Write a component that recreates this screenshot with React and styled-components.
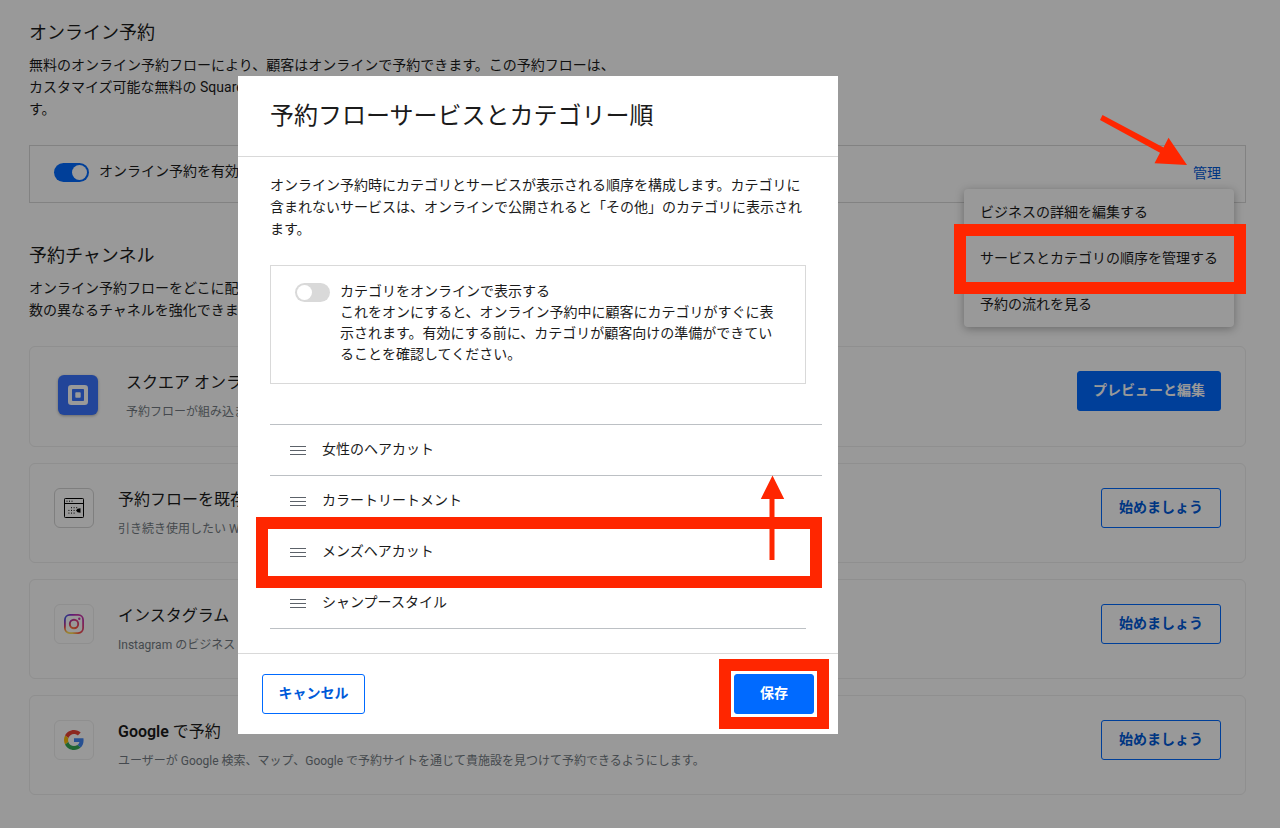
import React from 'react';
import styled, { createGlobalStyle, css } from 'styled-components';

const GlobalStyle = createGlobalStyle`
  *, *::before, *::after { box-sizing: border-box; }
  body {
    margin: 0;
    background: #fff;
    color: #1b1b1b;
    font-family: Roboto, "Noto Sans CJK JP", sans-serif;
    font-size: 14px;
    line-height: 22px;
  }
  h1, h2, h3, p, ul { margin: 0; padding: 0; }
  ul { list-style: none; }
  button { font-family: inherit; cursor: pointer; }
`;

const Page = styled.main`
  min-height: 100vh;
  padding: 21px 34px 32px 29px;
`;

const SectionTitle = styled.h2`
  font-size: 18px;
  font-weight: 400;
  line-height: 24px;
`;

const SectionText = styled.p`
  max-width: 640px;
  margin-top: 9px;
`;

const EnablePanel = styled.section`
  position: relative;
  display: flex;
  align-items: flex-start;
  justify-content: space-between;
  height: 58px;
  margin: 25px 0 41px;
  padding: 15px 24px;
  border: 1px solid #d9d9d9;
`;

const ToggleLabel = styled.label`
  display: flex;
  gap: 10px;
  line-height: 21px;
`;

const Toggle = styled.input.attrs({ type: 'checkbox' })`
  appearance: none;
  flex: none;
  display: flex;
  width: 35px;
  height: 19px;
  margin: 2px 0 0;
  padding: 2px;
  border-radius: 10px;
  background: #d9d9d9;

  &::before {
    content: '';
    width: 15px;
    height: 15px;
    border-radius: 50%;
    background: #fff;
  }
  &:checked {
    justify-content: flex-end;
    background: #006aff;
  }
`;

const ManageButton = styled.button`
  padding: 0;
  border: 0;
  background: none;
  color: #005ad9;
  font-size: 14px;
  line-height: 24px;
`;

const Menu = styled.ul`
  position: absolute;
  top: 43px;
  right: 11px;
  width: 270px;
  border-radius: 4px;
  background: #fff;
  box-shadow: 0 2px 10px rgba(0, 0, 0, 0.3);
`;

const MenuItem = styled.li`
  position: relative;
`;

const MenuButton = styled.button`
  display: block;
  width: 100%;
  height: 46px;
  padding: 0 16px 3px;
  border: 0;
  background: none;
  color: inherit;
  font-size: 14px;
  text-align: left;
  white-space: nowrap;
`;

const Highlight = styled.div`
  position: absolute;
  z-index: 20;
  inset: ${(p) => p.$inset};
  border: 12px solid #ff2600;
  pointer-events: none;
`;

const Arrow = styled.svg`
  position: absolute;
  z-index: 20;
  top: ${(p) => p.$top};
  right: ${(p) => p.$right};
  fill: #ff2600;
  pointer-events: none;
`;

const ChannelList = styled.ul`
  display: flex;
  flex-direction: column;
  gap: 16px;
  margin-top: 25px;
`;

const ChannelCard = styled.li`
  display: flex;
  align-items: flex-start;
  gap: 24px;
  padding: 24px;
  border: 1px solid #eee;
  border-radius: 6px;
`;

const ChannelInfo = styled.div`
  flex: 1;
  min-width: 0;
`;

const ChannelName = styled.h3`
  font-size: 16px;
  font-weight: 400;
  line-height: 24px;
`;

const Brand = styled.span`
  font-weight: 600;
`;

const ChannelText = styled.p`
  margin-top: 8px;
  color: #737b82;
  font-size: 12px;
  line-height: 18px;
`;

const AppTile = styled.div`
  display: grid;
  place-items: center;
  flex: none;
  width: 40px;
  height: 40px;
  border-radius: 6px;
  ${(p) =>
    p.$brand
      ? css`
          margin: 4px 4px 7px;
          background: #3974ff;
          box-shadow: 0 1px 3px rgba(0, 0, 0, 0.3);
        `
      : css`
          border: 1px solid ${p.$strong ? '#d4d4d4' : '#eee'};
        `}
`;

const Button = styled.button`
  height: 40px;
  min-width: ${(p) => p.$min || '120px'};
  padding: 0 15px 2px;
  border: 1px solid #006aff;
  border-radius: 3px;
  background: ${(p) => (p.$primary ? '#006aff' : 'transparent')};
  color: ${(p) => (p.$primary ? '#fff' : '#005ad9')};
  font-size: 14px;
  font-weight: 600;
  line-height: 20px;
  white-space: nowrap;
`;

const Scrim = styled.div`
  position: fixed;
  inset: 0;
  z-index: 10;
  display: flex;
  align-items: flex-start;
  justify-content: center;
  padding: 76px 204px 0 0;
  background: rgba(0, 0, 0, 0.4);
`;

const Dialog = styled.section`
  width: 600px;
  max-width: 100%;
  background: #fff;
`;

const DialogHeader = styled.header`
  padding: 24px 32px;
  border-bottom: 1px solid #d9d9d9;
`;

const DialogTitle = styled.h1`
  font-size: 24px;
  font-weight: 400;
  line-height: 32px;
`;

const DialogBody = styled.div`
  padding: 17px 32px 24px;
`;

const OptionBox = styled.div`
  margin: 25px 0 40px;
  padding: 15px 24px 18px;
  border: 1px solid #d9d9d9;
`;

const CategoryList = styled.ul`
  margin-right: -16px;

  &::after {
    content: '';
    display: block;
    margin-right: 16px;
    border-top: 1px solid #bcc0c4;
  }
`;

const CategoryRow = styled.li`
  position: relative;
  display: flex;
  align-items: center;
  gap: 16px;
  height: 51px;
  padding-left: 20px;
  border-top: 1px solid #bcc0c4;
`;

const CategoryName = styled.span`
  padding-bottom: 2px;
`;

const DialogFooter = styled.footer`
  display: flex;
  justify-content: space-between;
  padding: 20px 24px;
  border-top: 1px solid #d9d9d9;
`;

const SaveSlot = styled.div`
  position: relative;
`;

const SquareIcon = () => (
  <svg width="20" height="20" viewBox="0 0 20 20" aria-hidden="true">
    <path
      fill="#fff"
      fillRule="evenodd"
      d="M3.3 0h13.4A3.3 3.3 0 0 1 20 3.3v13.4a3.3 3.3 0 0 1-3.3 3.3H3.3A3.3 3.3 0 0 1 0 16.7V3.3A3.3 3.3 0 0 1 3.3 0ZM4.8 4a.8.8 0 0 0-.8.8v10.4c0 .45.35.8.8.8h10.4a.8.8 0 0 0 .8-.8V4.8a.8.8 0 0 0-.8-.8Z"
    />
    <rect x="7.3" y="7.3" width="5.4" height="5.4" rx="0.8" fill="#fff" />
  </svg>
);

const DOTS = [
  [7, 9.2], [9.6, 9.2], [12.2, 9.2],
  [4.4, 11.9], [7, 11.9], [9.6, 11.9],
  [4.4, 14.6], [7, 14.6], [9.6, 14.6],
];

const WebsiteIcon = () => (
  <svg width="20" height="20" viewBox="0 0 20 20" aria-hidden="true">
    <rect x="0.5" y="0.5" width="19" height="19" rx="0.8" fill="none" stroke="#000" />
    <path d="M1 5.5h18" stroke="#000" />
    <path d="M2.5 3.2h1M5 3.2h1M7.500 3.200h1" stroke="#000" />
    {DOTS.map(([x, y]) => (
      <rect key={`${x}-${y}`} x={x} y={y} width="1" height="1" fill="#000" />
    ))}
    <path d="M12 12.500 13.500 10.800 16.500 10.200v4.600l-3-.6Z" fill="#000" />
  </svg>
);

const InstagramIcon = () => (
  <svg width="20" height="20" viewBox="0 0 20 20" aria-hidden="true">
    <defs>
      <radialGradient id="ig-warm" cx="0.27" cy="1.08" r="1">
        <stop offset="0" stopColor="#fd5" />
        <stop offset="0.18" stopColor="#fd5" />
        <stop offset="0.5" stopColor="#ff543e" />
        <stop offset="1" stopColor="#c837ab" />
      </radialGradient>
      <radialGradient id="ig-cool" cx="-0.1" cy="0.05" r="0.7">
        <stop offset="0" stopColor="#3771c8" />
        <stop offset="0.3" stopColor="#4c5bdc" />
        <stop offset="1" stopColor="#60f" stopOpacity="0" />
      </radialGradient>
      <mask id="ig-shape">
        <rect x="0.9" y="0.9" width="18.2" height="18.2" rx="5" fill="none" stroke="#fff" strokeWidth="1.8" />
        <circle cx="10" cy="10" r="4.2" fill="none" stroke="#fff" strokeWidth="1.9" />
        <circle cx="15.3" cy="4.7" r="1.2" fill="#fff" />
      </mask>
    </defs>
    <g mask="url(#ig-shape)">
      <rect width="20" height="20" fill="url(#ig-warm)" />
      <rect width="20" height="20" fill="url(#ig-cool)" />
    </g>
  </svg>
);

const GoogleIcon = () => (
  <svg width="20" height="20" viewBox="0 0 48 48" aria-hidden="true">
    <path fill="#EA4335" d="M24 9.5c3.54 0 6.71 1.22 9.21 3.6l6.85-6.85C35.9 2.38 30.47 0 24 0 14.62 0 6.51 5.38 2.56 13.22l7.98 6.19C12.43 13.72 17.74 9.5 24 9.5z" />
    <path fill="#4285F4" d="M46.98 24.55c0-1.57-.15-3.09-.38-4.55H24v9.02h12.94c-.58 2.96-2.26 5.48-4.78 7.18l7.73 6c4.51-4.18 7.09-10.36 7.09-17.65z" />
    <path fill="#FBBC05" d="M10.53 28.59c-.48-1.45-.76-2.99-.76-4.59s.27-3.14.76-4.59l-7.98-6.19C.92 16.46 0 20.12 0 24c0 3.88.92 7.54 2.56 10.78l7.97-6.19z" />
    <path fill="#34A853" d="M24 48c6.48 0 11.93-2.13 15.89-5.81l-7.73-6c-2.15 1.45-4.92 2.3-8.16 2.3-6.26 0-11.57-4.22-13.47-9.91l-7.98 6.19C6.51 42.62 14.62 48 24 48z" />
  </svg>
);

const DragHandle = () => (
  <svg width="16" height="9" viewBox="0 0 16 9" aria-hidden="true">
    <path d="M0 .5h16M0 4.5h16M0 8.5h16" stroke="#5c6269" />
  </svg>
);

const channels = [
  {
    name: 'スクエア オンライン',
    text: '予約フローが組み込まれたサイト',
    icon: <SquareIcon />,
    brand: true,
    action: 'プレビューと編集',
  },
  {
    name: '予約フローを既存サイトに',
    text: '引き続き使用したい Web サイト',
    icon: <WebsiteIcon />,
    strong: true,
    action: '始めましょう',
  },
  {
    name: 'インスタグラム',
    text: 'Instagram のビジネス プロフィール',
    icon: <InstagramIcon />,
    action: '始めましょう',
  },
  {
    name: (
      <>
        <Brand>Google</Brand> で予約
      </>
    ),
    text: 'ユーザーが Google 検索、マップ、Google で予約サイトを通じて貴施設を見つけて予約できるようにします。',
    icon: <GoogleIcon />,
    action: '始めましょう',
  },
];

const menuItems = [
  { label: 'ビジネスの詳細を編集する' },
  { label: 'サービスとカテゴリの順序を管理する', marked: true },
  { label: '予約の流れを見る' },
];

const categories = [
  { name: '女性のヘアカット' },
  { name: 'カラートリートメント' },
  { name: 'メンズヘアカット', marked: true },
  { name: 'シャンプースタイル' },
];

export default function App() {
  return (
    <>
      <GlobalStyle />
      <Page>
        <SectionTitle>オンライン予約</SectionTitle>
        <SectionText>
          無料のオンライン予約フローにより、顧客はオンラインで予約できます。この予約フローは、
          <br />
          カスタマイズ可能な無料の Square オンラインサイトでも利用できま
          <br />
          す。
        </SectionText>
        <EnablePanel>
          <ToggleLabel>
            <Toggle defaultChecked />
            オンライン予約を有効にする
          </ToggleLabel>
          <ManageButton>管理</ManageButton>
          <Menu>
            {menuItems.map((item) => (
              <MenuItem key={item.label}>
                <MenuButton>{item.label}</MenuButton>
                {item.marked && <Highlight $inset="-11px -12px -13px -10px" />}
              </MenuItem>
            ))}
          </Menu>
          <Arrow $top="-31px" $right="57px" width="88" height="51" viewBox="0 0 88 51" aria-hidden="true">
            <path d="M2.5 0 63.5 32.5 68.5 22.7 87 50 54.5 48.3 60 37.8 0 5Z" />
          </Arrow>
        </EnablePanel>

        <SectionTitle>予約チャンネル</SectionTitle>
        <SectionText>
          オンライン予約フローをどこに配置するか、複
          <br />
          数の異なるチャネルを強化できます。
        </SectionText>
        <ChannelList>
          {channels.map((c, i) => (
            <ChannelCard key={i}>
              <AppTile $brand={c.brand} $strong={c.strong}>
                {c.icon}
              </AppTile>
              <ChannelInfo>
                <ChannelName>{c.name}</ChannelName>
                <ChannelText>{c.text}</ChannelText>
              </ChannelInfo>
              <Button $primary={c.brand}>{c.action}</Button>
            </ChannelCard>
          ))}
        </ChannelList>
      </Page>

      <Scrim>
        <Dialog role="dialog" aria-modal="true" aria-labelledby="dialog-title">
          <DialogHeader>
            <DialogTitle id="dialog-title">予約フローサービスとカテゴリー順</DialogTitle>
          </DialogHeader>
          <DialogBody>
            <p>
              オンライン予約時にカテゴリとサービスが表示される順序を構成します。カテゴリに含まれないサービスは、オンラインで公開されると「その他」のカテゴリに表示されます。
            </p>
            <OptionBox>
              <ToggleLabel>
                <Toggle />
                <span>
                  カテゴリをオンラインで表示する
                  <br />
                  これをオンにすると、オンライン予約中に顧客にカテゴリがすぐに表示されます。有効にする前に、カテゴリが顧客向けの準備ができていることを確認してください。
                </span>
              </ToggleLabel>
            </OptionBox>
            <CategoryList>
              {categories.map((c) => (
                <CategoryRow key={c.name}>
                  <DragHandle />
                  <CategoryName>{c.name}</CategoryName>
                  {c.marked && (
                    <>
                      <Highlight $inset="-10px 0 -11px -14px" />
                      <Arrow $top="-52px" $right="37px" width="25" height="85" viewBox="0 0 25 85" aria-hidden="true">
                        <path d="M12.5.5 24.2 24H14.5V85H9.5V24H.8Z" />
                      </Arrow>
                    </>
                  )}
                </CategoryRow>
              ))}
            </CategoryList>
          </DialogBody>
          <DialogFooter>
            <Button $min="103px">キャンセル</Button>
            <SaveSlot>
              <Button $primary $min="80px">
                保存
              </Button>
              <Highlight $inset="-15px" />
            </SaveSlot>
          </DialogFooter>
        </Dialog>
      </Scrim>
    </>
  );
}
